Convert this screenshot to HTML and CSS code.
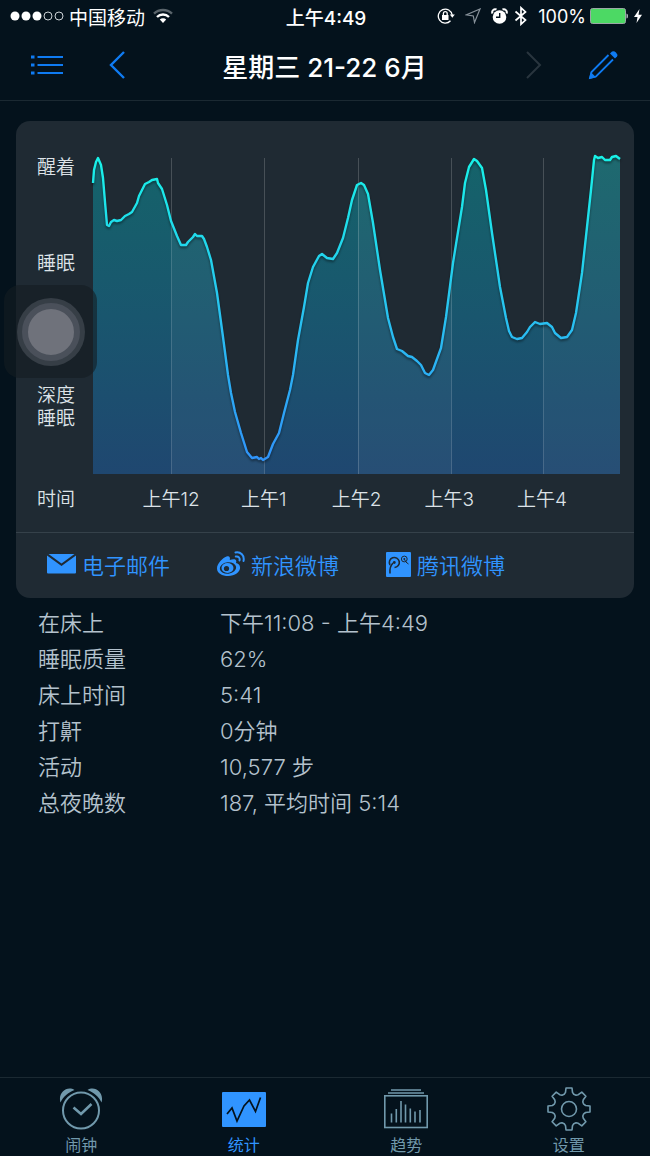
FILE: index.html
```html
<!DOCTYPE html>
<html lang="zh-CN">
<head>
    <meta charset="UTF-8">
    <meta name="viewport" content="width=device-width, initial-scale=1.0">
    <title>睡眠统计</title>
    <link rel="stylesheet" href="styles.css">
</head>
<body>
    <header class="header">
        <div class="status">
            <div class="status-left">
                <svg width="54" height="12" viewBox="0 0 54 12">
                    <g fill="#fff"><circle cx="5" cy="6" r="4.5"/><circle cx="16" cy="6" r="4.5"/><circle cx="27" cy="6" r="4.5"/></g>
                    <g fill="none" stroke="#ccd2d6"><circle cx="38" cy="6" r="4"/><circle cx="49" cy="6" r="4"/></g>
                </svg>
                <span>中国移动</span>
                <svg width="20" height="16" viewBox="0 0 20 16" fill="none" stroke-width="2.4">
                    <path d="M1 5.6a13 13 0 0 1 18 0" stroke="#5a646b"/>
                    <path d="M4 9a8.6 8.6 0 0 1 12 0" stroke="#fff"/>
                    <path d="M6.8 11.6a4.6 4.6 0 0 1 6.4 0L10 15z" fill="#fff"/>
                </svg>
            </div>
            <div class="status-time">上午4:49</div>
            <div class="status-right">
                <svg width="18" height="18" viewBox="0 0 18 18" fill="none" stroke="#fff" stroke-width="1.3">
                    <path d="M13.5 13.8A7 7 0 1 1 15.2 8"/>
                    <path d="M12.8 7.5h5l-2.5 3.2z" fill="#fff" stroke="none"/>
                    <rect x="5" y="8" width="6.5" height="5" fill="#fff" stroke="none"/>
                    <path d="M6.4 8V6.5a1.9 1.9 0 0 1 3.8 0V8"/>
                </svg>
                <svg width="16" height="16" viewBox="0 0 16 16" fill="none" stroke="#87919a" stroke-width="1.2">
                    <path d="M15 1L9.5 14.5 8.3 8 1.5 6.8z"/>
                </svg>
                <svg width="17" height="17" viewBox="0 0 17 17">
                    <circle cx="8.5" cy="9" r="6.8" fill="#fff"/>
                    <path d="M1.5 5.5a3 3 0 0 1 4-4M15.5 5.5a3 3 0 0 0-4-4" stroke="#fff" stroke-width="2" fill="none"/>
                    <path d="M8.7 5v4.3H5" stroke="#04121c" stroke-width="1.4" fill="none"/>
                </svg>
                <svg width="14" height="20" viewBox="0 0 14 20" fill="none" stroke="#fff" stroke-width="1.7">
                    <path d="M1.5 5.5l10 8.5L7 18.2V1.8l4.5 4.2-10 8.500"/>
                </svg>
                <span class="percent">100%</span>
                <svg width="38" height="16" viewBox="0 0 38 16">
                    <rect x=".5" y=".5" width="35" height="15" rx="2" fill="#4cd964" stroke="#9aa7a5"/>
                    <path d="M36.5 5.500q1.500 0 1.500 2.500t-1.500 2.500z" fill="#b8c0c4"/>
                </svg>
                <svg width="8" height="14" viewBox="0 0 8 14"><path d="M5.500 0L0 8h3.500L2.500 14 8 5.800H4.500z" fill="#fff"/></svg>
            </div>
        </div>
        <nav class="nav">
            <div class="nav-side">
                <button class="icon-btn" aria-label="列表">
                    <svg width="32" height="20" viewBox="0 0 32 20" fill="none" stroke="#0f7bf2" stroke-width="2">
                        <path d="M6.5 2H32M6.5 10H32M6.5 18H32"/>
                        <path d="M0 2h3.5M0 10h3.5M0 18h3.5" stroke-width="3"/>
                    </svg>
                </button>
                <button class="icon-btn" aria-label="前一天">
                    <svg width="16" height="28" viewBox="0 0 16 28" fill="none" stroke="#0f7bf2" stroke-width="2.4"><path d="M15 1L2 14l13 13"/></svg>
                </button>
            </div>
            <h1 class="title">星期三 21-22 6月</h1>
            <div class="nav-side nav-end">
                <button class="icon-btn" aria-label="后一天" disabled>
                    <svg width="16" height="28" viewBox="0 0 16 28" fill="none" stroke="#29353e" stroke-width="2"><path d="M1 1l13 13L1 27"/></svg>
                </button>
                <button class="icon-btn" aria-label="编辑">
                    <svg width="30" height="30" viewBox="0 0 30 30" fill="none" stroke="#0f7bf2" stroke-width="1.8">
                        <path d="M20.5 5L3.500 22 2 28 8 26.500 25 9.500"/>
                        <path d="M1 29l1.800-7 5.200 5.200z" fill="#0f7bf2" stroke="none"/>
                        <path d="M22 3.500l2-2q2-1 4 1t1 4l-2 2z" fill="#0f7bf2" stroke="none"/>
                    </svg>
                </button>
            </div>
        </nav>
    </header>

    <main class="main">
        <section class="card">
            <div class="chart">
                <div class="levels">
                    <span>醒着</span>
                    <span>睡眠</span>
                    <span>深度<br>睡眠</span>
                </div>
                <svg class="plot" viewBox="93 152 527 322" preserveAspectRatio="none">
                    <defs>
                        <linearGradient id="area" gradientUnits="userSpaceOnUse" x1="0" y1="158" x2="0" y2="474">
                            <stop offset="0" stop-color="#15636a"/>
                            <stop offset=".5" stop-color="#19566e"/>
                            <stop offset="1" stop-color="#1f4770"/>
                        </linearGradient>
                        <linearGradient id="stroke" gradientUnits="userSpaceOnUse" x1="0" y1="158" x2="0" y2="460">
                            <stop offset="0" stop-color="#18f2e8"/>
                            <stop offset=".5" stop-color="#28c4f0"/>
                            <stop offset="1" stop-color="#3094fa"/>
                        </linearGradient>
                        <clipPath id="under"><use href="#shape"/></clipPath>
                    </defs>
                    <path id="shape" fill="url(#area)"/>
                    <g clip-path="url(#under)" fill="#fff" fill-opacity=".04">
                        <rect x="172" y="152" width="92" height="322"/>
                        <rect x="358" y="152" width="93" height="322"/>
                        <rect x="544" y="152" width="76" height="322"/>
                    </g>
                    <path class="gridline" d="M171.5 158V474M264.5 158V474M358.5 158V474M451.5 158V474M543.5 158V474"/>
                    <path id="line" class="line" stroke="url(#stroke)"/>
                </svg>
                <span class="time-label">时间</span>
                <div class="hours">
                    <span>上午12</span>
                    <span>上午1</span>
                    <span>上午2</span>
                    <span>上午3</span>
                    <span>上午4</span>
                </div>
            </div>
            <div class="share">
                <button class="share-btn">
                    <svg width="29" height="20" viewBox="0 0 29 20" fill="#3094ff">
                        <path d="M1.5 0h26L14.5 9.5z"/>
                        <path d="M0 1.5L14.5 12 29 1.5V18.5q0 1-1 1H1q-1 0-1-1z"/>
                    </svg>
                    电子邮件
                </button>
                <button class="share-btn">
                    <svg width="28" height="26" viewBox="0 0 28 26">
                        <path fill="#3094ff" d="M9.5 5.5c2.5-1 4 .2 3.300 3.500 3-1.200 6.500-1.500 6.500 1.300 0 .9-.4 1.500-.2 1.800.3.300 4 .8 4 4.700 0 4.300-5.300 8.200-11.800 8.200C5.200 25 0 22 0 17.400 0 12.500 5.500 7 9.500 5.500z"/>
                        <ellipse cx="11" cy="17" rx="8.2" ry="5.800" fill="#1f2a33" transform="rotate(-7 11 17)"/>
                        <ellipse cx="10.5" cy="17" rx="6" ry="5" fill="#3094ff"/>
                        <circle cx="9.5" cy="17.5" r="2.6" fill="#1f2a33"/>
                        <path d="M18.500 1.500c5-1 9.300 3 8 8.500M18.800 5.500c2.600-.5 4.400 1.500 3.700 4" fill="none" stroke="#3094ff" stroke-width="2" stroke-linecap="round"/>
                    </svg>
                    新浪微博
                </button>
                <button class="share-btn">
                    <svg width="25" height="25" viewBox="0 0 25 25" fill="none" stroke="#1f2a33">
                        <rect width="25" height="25" rx="1" fill="#3094ff" stroke="none"/>
                        <path d="M4 21.500C3.500 17 4 14 7 11" stroke-width="1.600"/>
                        <path d="M4 13A5 5 0 1 1 8.500 15.500" stroke-width="1.600"/>
                        <circle cx="8.300" cy="10.500" r="1.400" fill="#1f2a33" stroke="none"/>
                        <circle cx="18.300" cy="7" r="2.900"/>
                        <circle cx="18.300" cy="7" r="1" fill="#1f2a33" stroke="none"/>
                        <path d="M18.500 7.500q1 3 4 4.500"/>
                    </svg>
                    腾讯微博
                </button>
            </div>
        </section>

        <dl class="details">
            <dt>在床上</dt><dd>下午11:08 - 上午4:49</dd>
            <dt>睡眠质量</dt><dd>62%</dd>
            <dt>床上时间</dt><dd>5:41</dd>
            <dt>打鼾</dt><dd>0分钟</dd>
            <dt>活动</dt><dd>10,577 步</dd>
            <dt>总夜晚数</dt><dd>187, 平均时间 5:14</dd>
        </dl>
    </main>

    <nav class="tabs">
        <a class="tab" href="#alarm">
            <svg width="44" height="44" viewBox="0 0 44 44" fill="none" stroke="#7199ac" stroke-width="2">
                <circle cx="22" cy="23.5" r="18"/>
                <path d="M14.5 20.5l7.500 6.500 10.500-10" stroke-width="2.600"/>
                <path d="M1.500 15.500C-1.500 6 8 -2 15.500 3 9 5.500 4.500 9.500 1.500 15.500zM42.500 15.500C45.500 6 36 -2 28.500 3 35 5.500 39.500 9.500 42.500 15.500z" fill="#7199ac" stroke="none"/>
            </svg>
            闹钟
        </a>
        <a class="tab active" href="#stats">
            <svg width="44" height="44" viewBox="0 0 44 44">
                <rect y="5" width="44" height="35" rx="1" fill="#3094ff"/>
                <path d="M5 27l5-6 5 13 7-15 5.500-6L33.500 24.500 38.500 10.500" fill="none" stroke="#04121c" stroke-width="1.700"/>
            </svg>
            统计
        </a>
        <a class="tab" href="#trends">
            <svg width="44" height="44" viewBox="0 0 44 44" fill="none" stroke="#7199ac" stroke-width="1.600">
                <path d="M7 3h30M4 6h36"/>
                <rect x=".8" y="8.800" width="42.400" height="31.700"/>
                <path d="M7.500 35.500v-9M12.300 35.500V22M17 35.500V14M21.500 35.500V17.500M26.300 35.500V21.500M31 35.500V24.500M36 35.500V23"/>
            </svg>
            趋势
        </a>
        <a class="tab" href="#settings">
            <svg width="44" height="44" viewBox="0 0 44 44" fill="none" stroke="#7199ac" stroke-width="1.600">
                <path id="gear" stroke-linejoin="round"/>
                <circle cx="22" cy="22" r="7.500"/>
            </svg>
            设置
        </a>
    </nav>

    <button class="assist" aria-label="辅助触控"><span class="assist-ring"></span></button>

    <script>
        const points = [
            [93,183],[94,170],[96,162],[98,158],[101,165],[103,178],[105,202],[107,225],[109,226],[111,222],[114,220],[117,221],[121,220],[125,216],
            [129,214],[132,212],[137,203],[139,196],[142,190],[145,184],[149,182],[152,180],[157,179],[158,183],[162,189],[167,205],
            [171,221],[177,236],[181,245],[186,245],[188,242],[193,237],[195,234],[197,236],[202,236],[204,239],[207,247],
            [211,260],[217,293],[223,337],[228,375],[231,393],[235,412],[241,433],[247,452],[252,458],[257,457],[259,459],[261,458],[263,460],[268,457],
            [273,444],[279,433],[284,413],[290,390],[293,375],[298,340],[304,307],[308,283],[313,267],[319,256],[322,254],
            [327,258],[333,259],[337,253],[343,238],[348,218],[352,200],[357,185],[361,183],[364,185],[368,194],[373,223],
            [380,270],[388,318],[393,337],[397,349],[402,351],[408,356],[412,357],[417,361],[421,365],[425,373],[429,375],[433,370],[441,348],
            [446,317],[453,263],[462,207],[465,183],[469,167],[474,159],[477,161],[482,168],[486,190],[492,233],[500,287],
            [506,318],[509,331],[512,337],[517,339],[522,338],[527,332],[530,327],[535,322],[540,324],[547,323],[552,327],[555,333],
            [561,338],[567,337],[572,330],[576,313],[582,273],[587,227],[591,190],[594,160],[595,156],[598,158],[602,157],
            [605,160],[610,160],[612,157],[616,156],[620,159]
        ];
        const line = 'M' + points.map(p => p.join(' ')).join('L');
        document.getElementById('line').setAttribute('d', line);
        document.getElementById('shape').setAttribute('d', line + 'V474H93Z');

        // eight-tooth gear, [angle offset, radius] per tooth
        const tooth = [[-18, 15.5], [-12, 17], [-8, 21.2], [8, 21.2], [12, 17], [18, 15.5]];
        let gear = [];
        for (let i = 0; i < 8; i++) {
            tooth.forEach(([offset, r]) => {
                const a = (i * 45 + offset) * Math.PI / 180;
                gear.push((22 + r * Math.sin(a)).toFixed(1) + ' ' + (22 - r * Math.cos(a)).toFixed(1));
            });
        }
        document.getElementById('gear').setAttribute('d', 'M' + gear.join('L') + 'Z');
    </script>
</body>
</html>
```

FILE: styles.css
```css
* {
    box-sizing: border-box;
}
body {
    margin: 0;
    min-height: 100vh;
    display: flex;
    flex-direction: column;
    font-family: Inter, "Noto Sans CJK SC", sans-serif;
    font-weight: 350;
    background-color: #04121c;
    color: #b4c2cd;
}
svg {
    display: block;
    flex-shrink: 0;
}
button {
    padding: 0;
    border: none;
    background: none;
    color: inherit;
    font: inherit;
    cursor: pointer;
}
.header {
    border-bottom: 1px solid #1b2932;
}
.status {
    display: grid;
    grid-template-columns: 1fr auto 1fr;
    align-items: center;
    height: 32px;
    padding: 0 8px 0 10px;
    color: #fff;
    font-size: 18px;
    font-weight: 400;
}
.status-left, .status-right {
    display: flex;
    align-items: center;
    gap: 6px;
}
.status-left {
    font-size: 19px;
    gap: 5px;
}
.status-left svg:last-child {
    margin-left: 3px;
}
.status-right {
    justify-content: flex-end;
}
.status-right svg:nth-child(-n+2) {
    margin-right: 4px;
}
.status-time {
    font-size: 19px;
    font-weight: 500;
}
.percent {
    margin-left: 4px;
    margin-right: -2px;
}
.nav {
    display: grid;
    grid-template-columns: 1fr auto 1fr;
    align-items: center;
    height: 68px;
    padding: 0 32px 2px 31px;
}
.nav-side {
    display: flex;
    align-items: center;
    gap: 46px;
}
.nav-end {
    justify-content: flex-end;
}
.title {
    margin: 0;
    color: #fff;
    font-size: 26px;
    font-weight: 500;
}
.card {
    margin: 20px 16px 0;
    border-radius: 14px;
    background-color: #1f2a33;
}
.chart {
    display: grid;
    grid-template-columns: 56px 1fr;
    padding: 31px 14px 21px 21px;
    color: #dde3e8;
    font-size: 19px;
    line-height: 23px;
}
.levels {
    display: grid;
    grid-template-rows: 96px 132px auto;
    padding-top: 4px;
}
.plot {
    width: 100%;
    height: 322px;
    overflow: visible;
}
.gridline {
    stroke: #fff;
    stroke-opacity: 0.18;
    vector-effect: non-scaling-stroke;
}
.line {
    fill: none;
    stroke-width: 2.4px;
    stroke-linejoin: round;
    vector-effect: non-scaling-stroke;
    filter: drop-shadow(0 2px 1px rgba(0, 0, 0, 0.4));
}
.time-label, .hours {
    padding-top: 14px;
}
.hours {
    display: grid;
    grid-template-columns: repeat(5, 1fr);
    padding-left: 6%;
    padding-right: 6%;
    text-align: center;
}
.share {
    display: flex;
    gap: 47px;
    height: 66px;
    padding: 0 31px 3px;
    border-top: 1px solid #35414a;
}
.share-btn {
    display: flex;
    align-items: center;
    gap: 6px;
    color: #3094ff;
    font-family: "Noto Sans CJK SC", sans-serif;
    font-size: 22px;
}
.details {
    display: grid;
    grid-template-columns: 182px 1fr;
    margin: 0;
    padding: 7px 38px 0;
    font-size: 22px;
    line-height: 36px;
}
.details dd {
    margin: 0;
}
.tabs {
    display: grid;
    grid-template-columns: repeat(4, 1fr);
    margin-top: auto;
    padding-top: 9px;
    border-top: 1px solid #1b2932;
}
.tab {
    display: flex;
    flex-direction: column;
    align-items: center;
    gap: 3px;
    color: #7199ac;
    font-size: 16px;
    font-weight: 400;
    line-height: 22px;
    text-decoration: none;
}
.tab.active {
    color: #3094ff;
}
/* floating touch button */
.assist {
    position: absolute;
    top: 285px;
    left: 4px;
    display: flex;
    align-items: center;
    justify-content: center;
    width: 93px;
    height: 93px;
    border-radius: 16px;
    background-color: rgba(20, 28, 33, 0.6);
}
.assist-ring {
    width: 58px;
    height: 58px;
    border: 6px solid #4a505a;
    border-radius: 50%;
    background-color: #6f727b;
    box-shadow: 0 0 0 5px #363e46;
}
```
